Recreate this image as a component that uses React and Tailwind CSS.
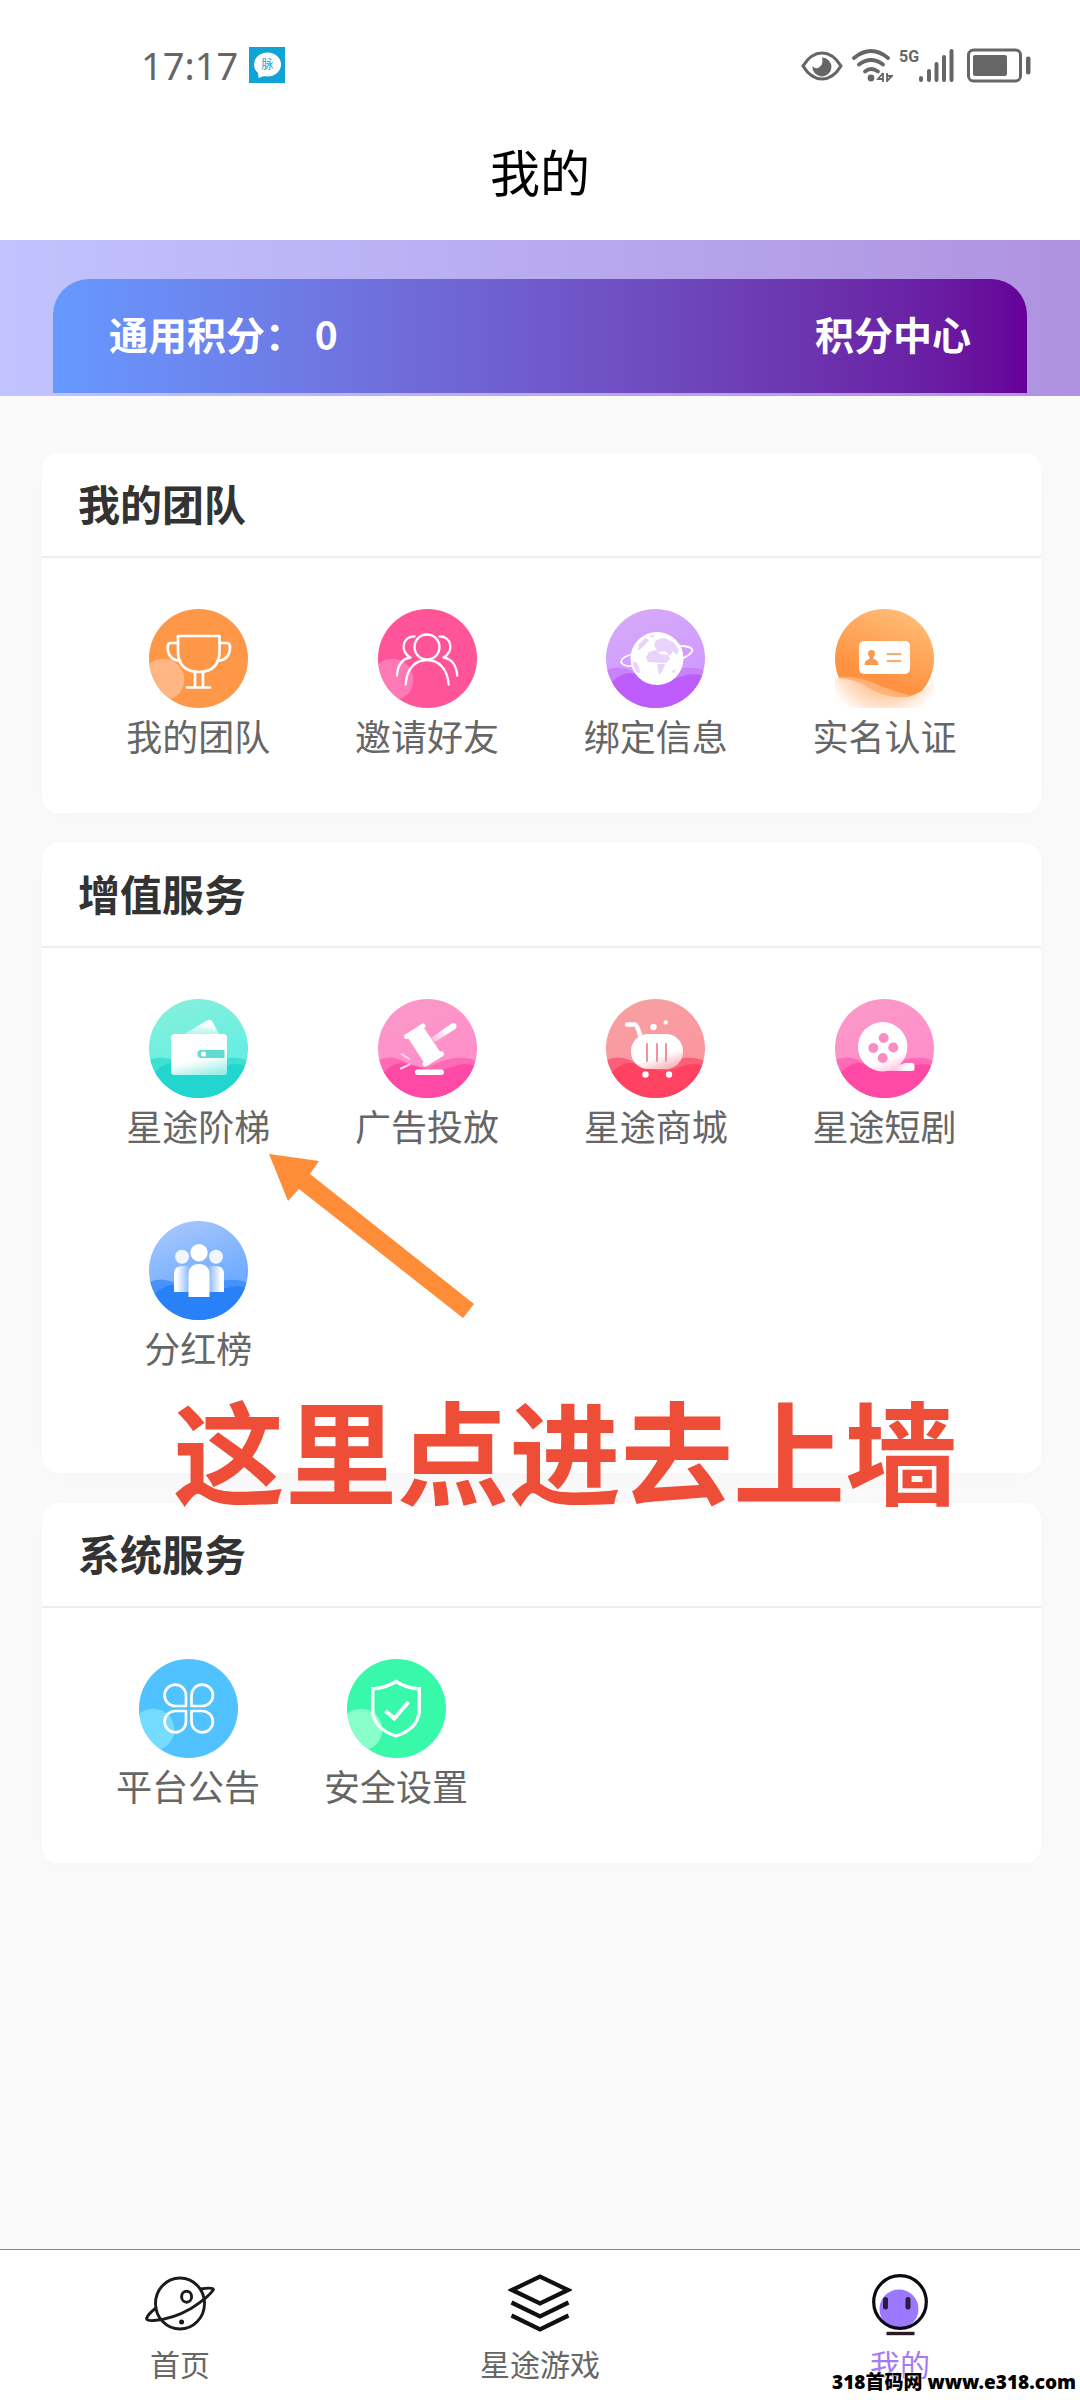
import React, { useState } from 'react';

// Round badge with a small lighter bubble in the lower left corner
const BubbleIcon = ({ id, color, bubble, children }) => (
  <svg viewBox="0 0 99 99" className="w-[99px] h-[99px]" fill="none" aria-hidden="true">
    <clipPath id={id}>
      <circle cx="49.5" cy="49.5" r="49.5" />
    </clipPath>
    <g clipPath={`url(#${id})`}>
      <rect width="99" height="99" fill={color} />
      <circle cx="14.3" cy="70.7" r="21" fill={bubble} />
    </g>
    <g stroke="#fff" strokeWidth="2.7" strokeLinecap="round" strokeLinejoin="round">
      {children}
    </g>
  </svg>
);

// Round badge with two waves at the bottom
const WaveIcon = ({ id, from, to, mid, dark, children }) => (
  <svg viewBox="0 0 99 99" className="w-[99px] h-[99px]" fill="none" aria-hidden="true">
    <defs>
      <clipPath id={id}>
        <circle cx="49.5" cy="49.5" r="49.5" />
      </clipPath>
      <linearGradient id={`${id}-bg`} x1="0.3" y1="0" x2="0.7" y2="1">
        <stop offset="0" stopColor={from} />
        <stop offset="0.7" stopColor={to} />
      </linearGradient>
    </defs>
    <g clipPath={`url(#${id})`}>
      <rect width="99" height="99" fill={`url(#${id}-bg)`} />
      <path d="M0 61Q12 56 24 61Q38 70 50 68Q66 60 78 59Q90 58 99 62V99H0Z" fill={mid} />
      <path d="M0 80Q12 64 24 64Q38 66 50 71Q62 73 74 68Q88 62 99 68V99H0Z" fill={dark} />
    </g>
    {children}
  </svg>
);

const TeamIcon = () => (
  <BubbleIcon id="team" color="#ff9748" bubble="#ffb684">
    <path d="M29 27H70.500V42Q70.500 62.500 50 63Q29 62.500 29 42Z" />
    <path d="M29 34H22Q18.700 34 18.700 38Q18.700 51 31.500 52M70.500 34H77.500Q81 34 81 38Q81 51 68 52" />
    <path d="M46 63V78M54 63V78M38 78.500H61" />
  </BubbleIcon>
);

const InviteIcon = () => (
  <BubbleIcon id="invite" color="#ff5598" bubble="#ff79b7">
    <g strokeWidth="2.3">
      <circle cx="49" cy="38" r="12.500" />
      <path d="M27.700 75.500C28.500 60 37 51 49 51S69.500 60 70.700 75.500" />
      <path d="M36.500 27.500C25 27 21 42 32.500 48.500C24 50 19.500 57 19 66.500" />
      <path d="M61.500 27.500C73 27 77 42 65.500 48.500C74 50 78.700 57 79.200 66.500" />
    </g>
  </BubbleIcon>
);

const BindIcon = () => (
  <WaveIcon id="bind" from="#d6a9f8" to="#d09bff" mid="#c783fa" dark="#bc5dfc">
    <path d="M27 45Q15 48 15 53Q17 58 29 57M73 37Q86 37 86.500 41.500Q85 46 75 50" stroke="#fff" strokeWidth="1.8" />
    <circle cx="51" cy="49.500" r="26.500" fill="#fff" />
    <g fill="#e8d3fb">
      <path d="M50 31L58 29L67 33L73 41L71 46L67 42L64 47L59 42L52 43L48 36Z" />
      <path d="M43 43L50 41L54 45L62 46L64 50L60 54L42 53L40 48Z" />
      <path d="M51 55H59L57 61L53 66L52 60Z" />
      <path d="M33 35L39 29L43 31L38 37L32 42ZM43 27L49 26L47 29Z" />
      <path d="M27 52L31 54L34 62L33 65Q27 60 27 52ZM66 62L70 60L68 65Z" />
    </g>
  </WaveIcon>
);

const RealNameIcon = () => (
  <svg viewBox="0 0 99 99" className="w-[99px] h-[99px]" fill="none" aria-hidden="true">
    <defs>
      <clipPath id="real">
        <circle cx="49.5" cy="49.5" r="49.5" />
      </clipPath>
      <linearGradient id="real-bg" x1="0.7" y1="0" x2="0.3" y2="1">
        <stop offset="0" stopColor="#ffbd77" />
        <stop offset="0.7" stopColor="#ff9140" />
      </linearGradient>
      <radialGradient id="real-glow" gradientUnits="userSpaceOnUse" cx="49.5" cy="49.5" r="62">
        <stop offset="0.5" stopColor="#ffc798" />
        <stop offset="0.75" stopColor="#ffe0c8" />
        <stop offset="1" stopColor="#fff" />
      </radialGradient>
    </defs>
    <g clipPath="url(#real)">
      <rect width="99" height="99" fill="url(#real-bg)" />
      <path d="M0 68Q25 66 46 77Q60 83 74 86L66 92L20 82Z" fill="#ffb177" />
    </g>
    <path d="M0 69Q20 69 36 80Q54 90 72 88Q88 84 99 72V99H0Z" fill="url(#real-glow)" />
    <rect x="24" y="32" width="51" height="33" rx="5" fill="#fff" />
    <circle cx="36.500" cy="44.500" r="3.500" fill="#f59a55" />
    <path d="M34.500 46H38.500V50Q43.500 51 43.500 56H29.500Q29.500 51 34.500 50Z" fill="#f59a55" />
    <path d="M52.500 45H65.500M52.500 52H65.500" stroke="#fbab70" strokeWidth="2.2" strokeLinecap="round" />
  </svg>
);

const LadderIcon = () => (
  <WaveIcon id="ladder" from="#84f0dc" to="#66eee2" mid="#3de0d2" dark="#22d6cf">
    <defs>
      <linearGradient id="ladder-body" x1="0.4" y1="0" x2="0.7" y2="1">
        <stop offset="0.6" stopColor="#fff" />
        <stop offset="1" stopColor="#9eeee6" />
      </linearGradient>
      <linearGradient id="ladder-flap" x1="0.7" y1="0" x2="0.5" y2="1">
        <stop offset="0.3" stopColor="#fff" />
        <stop offset="1" stopColor="#b5f5ea" />
      </linearGradient>
    </defs>
    <path d="M35 35L59 21Q61 20 63 22L70 35Z" fill="url(#ladder-flap)" />
    <rect x="22" y="35" width="56" height="41" rx="3.500" fill="url(#ladder-body)" />
    <path d="M52.500 51H75.500V59H52.500A4 4 0 0 1 52.500 51Z" fill="#63d9d3" />
    <circle cx="54.500" cy="55" r="2.600" fill="#fff" />
  </WaveIcon>
);

const AdIcon = () => (
  <WaveIcon id="ad" from="#fb98c8" to="#ff8fca" mid="#ff6ab6" dark="#ff4aa5">
    <defs>
      <linearGradient id="ad-handle" x1="1" y1="0" x2="0" y2="1">
        <stop offset="0.4" stopColor="#fff" />
        <stop offset="1" stopColor="#ffb4da" />
      </linearGradient>
    </defs>
    <path d="M53 39L73.500 24.500Q77 23 78.500 26Q79 29 76.500 30.500L57 43Z" fill="url(#ad-handle)" />
    <path d="M30 39L46 29L63 54L47 65Z" fill="#fff" />
    <path d="M28.500 37.500L45 27M47 65L63.500 55" stroke="#fff" strokeWidth="5" strokeLinecap="round" />
    <rect x="37" y="70.500" width="29" height="5.500" rx="2.700" fill="#fff" />
    <path d="M23.500 55L31 60M23 69.500L31.500 65.500" stroke="#ffd4ea" strokeWidth="2" strokeLinecap="round" />
  </WaveIcon>
);

const ShopIcon = () => (
  <WaveIcon id="shop" from="#f7a0a2" to="#fa979f" mid="#fb6078" dark="#fe425f">
    <defs>
      <linearGradient id="shop-body" x1="0.3" y1="0" x2="0.8" y2="1">
        <stop offset="0.6" stopColor="#fff" />
        <stop offset="1" stopColor="#fca9b4" />
      </linearGradient>
    </defs>
    <path d="M21 25.500H29Q31 26 34 36" stroke="#fff" strokeWidth="4.5" strokeLinecap="round" />
    <rect x="25" y="35" width="52" height="35" rx="17" fill="url(#shop-body)" />
    <path d="M41 45V62M51 45V62M60 45V62" stroke="#f5909c" strokeWidth="2" strokeLinecap="round" />
    <g fill="#fff">
      <circle cx="39.500" cy="75.500" r="3.200" />
      <circle cx="63" cy="75.500" r="3.200" />
      <circle cx="47.500" cy="28" r="3.200" />
      <circle cx="59.700" cy="23.500" r="2.200" />
    </g>
  </WaveIcon>
);

const DramaIcon = () => (
  <WaveIcon id="drama" from="#fb98c8" to="#ff8fca" mid="#ff6ab6" dark="#ff4aa5">
    <defs>
      <linearGradient id="drama-body" x1="0.3" y1="0" x2="0.7" y2="1">
        <stop offset="0.75" stopColor="#fff" />
        <stop offset="1" stopColor="#ffc4e1" />
      </linearGradient>
      <linearGradient id="drama-tail">
        <stop offset="0" stopColor="#ff9acb" />
        <stop offset="0.8" stopColor="#fff" />
      </linearGradient>
    </defs>
    <path d="M48 72L70 64H77Q79.500 64 79.500 67V70Q79.500 72 77 72Z" fill="url(#drama-tail)" />
    <circle cx="47.700" cy="47.700" r="24.700" fill="url(#drama-body)" />
    <g fill="#fb8cc4">
      <circle cx="48.700" cy="39" r="5" />
      <circle cx="38.300" cy="49" r="5" />
      <circle cx="58.300" cy="48.500" r="5" />
      <circle cx="47.700" cy="59" r="5" />
    </g>
  </WaveIcon>
);

const DividendIcon = () => (
  <WaveIcon id="dividend" from="#a5c6fc" to="#6fabff" mid="#4791fb" dark="#2881f7">
    <defs>
      <linearGradient id="side-l">
        <stop offset="0.2" stopColor="#fff" />
        <stop offset="1" stopColor="#8dbbfb" />
      </linearGradient>
      <linearGradient id="side-r">
        <stop offset="0" stopColor="#8dbbfb" />
        <stop offset="0.8" stopColor="#fff" />
      </linearGradient>
    </defs>
    <circle cx="33" cy="35.700" r="7" fill="#f1f7ff" />
    <path d="M25 71V53Q25 45 33 45H40V71Z" fill="url(#side-l)" />
    <circle cx="67" cy="35.700" r="7" fill="#f1f7ff" />
    <path d="M75 71V53Q75 45 67 45H60V71Z" fill="url(#side-r)" />
    <circle cx="50" cy="31.700" r="8.700" fill="#fff" />
    <path d="M39.500 76V54Q39.500 43 50 43Q60.500 43 60.500 54V76Z" fill="#fff" />
  </WaveIcon>
);

const NoticeIcon = () => (
  <BubbleIcon id="notice" color="#4fc2ff" bubble="#76dcff">
    <path d="M47 47H36.500A10.700 10.700 0 1 1 47 36.500Z" />
    <path d="M52.500 47V36.500A10.700 10.700 0 1 1 63 47Z" />
    <path d="M47 52V62.500A10.700 10.700 0 1 1 36.500 52Z" />
    <path d="M52.500 52H63A10.700 10.700 0 1 1 52.500 62.500Z" />
  </BubbleIcon>
);

const SecurityIcon = () => (
  <BubbleIcon id="security" color="#37f9a9" bubble="#88ffc9">
    <g strokeWidth="3.4" strokeLinecap="butt" strokeLinejoin="miter">
      <path d="M49 22.500Q38 29.500 25.700 29.700V52Q27 70 49 77Q71 70 72.300 52V29.700Q60 29.500 49 22.500Z" />
      <path d="M38.500 52L47.300 59.500L61.500 43" strokeWidth="4" />
    </g>
  </BubbleIcon>
);

const HomeTabIcon = () => (
  <svg viewBox="0 0 70 64" className="w-[70px] h-16" fill="none" stroke="#1b1b1b" strokeWidth="2.9" strokeLinecap="round" strokeLinejoin="round" aria-hidden="true">
    <ellipse cx="35" cy="29.500" rx="24.500" ry="25.500" />
    <path d="M11 34Q3 40 1.500 44.500Q2 47 9 46.500Q28 45 46 34.500Q64 23 68.500 15.500Q68 13 55.500 15" />
    <ellipse cx="41.600" cy="22.700" rx="5" ry="5.500" />
    <circle cx="36.600" cy="48" r="1.500" fill="#1b1b1b" strokeWidth="2" />
  </svg>
);

const GameTabIcon = () => (
  <svg viewBox="0 0 64 64" className="w-16 h-16" fill="none" stroke="#111" strokeWidth="4.2" strokeLinejoin="miter" aria-hidden="true">
    <path d="M4 16L32 2.500L60 16L32 29.500Z" />
    <path d="M3.500 28.500L32 42.500L60.500 28.500M3.500 41.500L32 55.500L60.500 41.500" />
  </svg>
);

const MineTabIcon = () => (
  <svg viewBox="0 0 56 64" className="w-14 h-16" fill="none" aria-hidden="true">
    <circle cx="27" cy="35" r="19.500" fill="#9a78ff" />
    <circle cx="28" cy="28" r="26.300" stroke="#0c0912" strokeWidth="3.2" />
    <path d="M13.500 25.500V33M36 25.500V33" stroke="#2a1c3a" strokeWidth="5" strokeLinecap="round" />
    <path d="M14.500 59.500H42.500" stroke="#2a1c26" strokeWidth="3.4" />
  </svg>
);

const sections = [
  {
    title: '我的团队',
    grid: 'grid grid-cols-4 gap-y-[71px] px-[42px] pt-[51px] pb-[53px]',
    items: [
      { label: '我的团队', Icon: TeamIcon },
      { label: '邀请好友', Icon: InviteIcon },
      { label: '绑定信息', Icon: BindIcon },
      { label: '实名认证', Icon: RealNameIcon },
    ],
  },
  {
    title: '增值服务',
    grid: 'grid grid-cols-4 gap-y-[71px] px-[42px] pt-[51px] pb-[101px]',
    marked: true,
    items: [
      { label: '星途阶梯', Icon: LadderIcon },
      { label: '广告投放', Icon: AdIcon },
      { label: '星途商城', Icon: ShopIcon },
      { label: '星途短剧', Icon: DramaIcon },
      { label: '分红榜', Icon: DividendIcon },
    ],
  },
  {
    title: '系统服务',
    grid: 'flex px-[42px] pt-[51px] pb-[53px] *:w-[208px]',
    items: [
      { label: '平台公告', Icon: NoticeIcon },
      { label: '安全设置', Icon: SecurityIcon },
    ],
  },
];

const tabs = [
  { label: '首页', Icon: HomeTabIcon },
  { label: '星途游戏', Icon: GameTabIcon },
  { label: '我的', Icon: MineTabIcon },
];

const StatusBar = () => (
  <div className="h-[130px] flex items-center justify-between pl-[141px] pr-[49px] text-[#666]">
    <div className="flex items-center gap-[11px]">
      <span className="text-[38px] leading-10 font-['Noto_Sans',sans-serif]">17:17</span>
      <svg viewBox="0 0 36 36" className="w-9 h-9" aria-hidden="true">
        <rect width="36" height="36" fill="#0fa3d6" />
        <ellipse cx="18.500" cy="17.500" rx="13.500" ry="12" fill="#fff" />
        <path d="M9 24L9.500 31L18 28Z" fill="#fff" />
        <text x="18.500" y="22" fontSize="12" textAnchor="middle" fill="#0fa3d6">脉</text>
      </svg>
    </div>
    <div className="flex items-center">
      <svg viewBox="0 0 42 36" className="w-[42px] h-9 mr-2" fill="none" aria-hidden="true">
        <path d="M2 19Q10 6 21 6T40 19Q32 32 21 32T2 19Z" stroke="#666" strokeWidth="3.2" strokeLinejoin="round" />
        <path d="M21 10.500A9.500 9.500 0 1 1 11.500 19Q14 22 17 21Q23 18 21 10.500Z" fill="#666" />
      </svg>
      <svg viewBox="0 0 42 36" className="w-[42px] h-9 mr-1.5" fill="none" aria-hidden="true">
        <g stroke="#666" strokeWidth="3.800" strokeLinecap="round">
          <path d="M3 11Q20 -3 37 11" />
          <path d="M8 17.500Q20 8.500 32 17.500" />
          <path d="M14 24.500Q20 19.500 27 24.500" />
        </g>
        <circle cx="20" cy="31" r="3.400" fill="#666" />
        <path d="M32 26V35M32 26L27 32H32M36 35V26M36 34L41 29H36" stroke="#666" strokeWidth="1.8" />
      </svg>
      <span className="self-start text-[16px] leading-5 font-bold font-['Roboto',sans-serif] w-5">5G</span>
      <svg viewBox="0 0 36 36" className="w-9 h-9 mr-3" fill="none" stroke="#666" strokeWidth="4" strokeLinecap="round" aria-hidden="true">
        <path d="M2 31V33M10 24V33M17.500 17V33M25 10V33M32.500 4V33" />
      </svg>
      <svg viewBox="0 0 64 36" className="w-16 h-9" fill="none" aria-hidden="true">
        <rect x="1.500" y="3" width="52" height="31" rx="5" stroke="#666" strokeWidth="3" />
        <rect x="6" y="8" width="34" height="21" rx="2" fill="#666" />
        <rect x="59" y="9.500" width="4.500" height="18" rx="2" fill="#666" />
      </svg>
    </div>
  </div>
);

const ServiceItem = ({ label, Icon }) => (
  <button type="button" className="flex flex-col items-center gap-0.5 cursor-pointer">
    <Icon />
    <span className="text-[36px] leading-[50px] whitespace-nowrap text-[#666]">{label}</span>
  </button>
);

// Arrow and caption drawn over the value-added services card
const Marker = () => (
  <div className="absolute left-[131px] top-[311px] z-10 pointer-events-none">
    <svg viewBox="0 0 206 166" className="w-[206px] h-[166px] ml-24" aria-hidden="true">
      <path d="M0 0L50 7L41 20L205 150L194 164L30 35L19 47Z" fill="#ff8d37" />
    </svg>
    <p className="mt-16 text-[112px] leading-[128px] font-bold whitespace-nowrap text-[#ee4e38]">这里点进去上墙</p>
  </div>
);

const Section = ({ title, grid, items, marked }) => (
  <section className="relative bg-white rounded-2xl shadow-[0_6px_30px_rgba(0,0,0,0.02)]">
    <h2 className="px-9 pt-[18px] pb-[22px] border-b-2 border-[#eee] text-[42px] leading-[63px] font-bold text-[#333]">{title}</h2>
    <div className={grid}>
      {items.map((item) => (
        <ServiceItem key={item.label} label={item.label} Icon={item.Icon} />
      ))}
    </div>
    {marked && <Marker />}
  </section>
);

const App = () => {
  const [activeTab, setActiveTab] = useState('我的');

  return (
    <div className="min-h-screen flex flex-col bg-[#fafafa] font-['Noto_Sans_CJK_SC',sans-serif]">
      <header className="bg-white">
        <StatusBar />
        <h1 className="pb-[30px] text-center text-[50px] leading-[80px] text-black">我的</h1>
      </header>

      <div className="bg-linear-to-r from-[#c1c3ff] to-[#af92e0] px-[53px] pt-[39px] pb-[3px]">
        <div className="h-[114px] flex items-center justify-between px-14 pb-1.5 rounded-t-[36px] bg-linear-to-r from-[#6699ff] to-[#660099] text-white text-[39px] font-bold">
          <p>
            通用积分： <span className="ml-0.5">0</span>
          </p>
          <a href="#points">积分中心</a>
        </div>
      </div>

      <main className="flex-1 flex flex-col gap-[30px] pl-[42px] pr-[39px] pt-[57px] pb-10">
        {sections.map((section) => (
          <Section key={section.title} {...section} />
        ))}
      </main>

      <nav className="relative flex border-t border-[#888] bg-white pt-6 pb-[19px]">
        {tabs.map(({ label, Icon }) => (
          <a
            key={label}
            href={`#${label}`}
            onClick={() => setActiveTab(label)}
            className="flex-1 flex flex-col items-center gap-[7px]"
          >
            <Icon />
            <span className={`text-[30px] leading-9 ${activeTab === label ? 'text-[#a47cf0]' : 'text-[#666]'}`}>{label}</span>
          </a>
        ))}
        <p className="absolute right-1 bottom-1.5 text-[19px] leading-6 font-black text-black whitespace-nowrap font-['Noto_Sans','Noto_Sans_CJK_SC',sans-serif] [text-shadow:0_0_2px_#fff,0_0_2px_#fff]">
          318首码网 www.e318.com
        </p>
      </nav>
    </div>
  );
};

export default App;
